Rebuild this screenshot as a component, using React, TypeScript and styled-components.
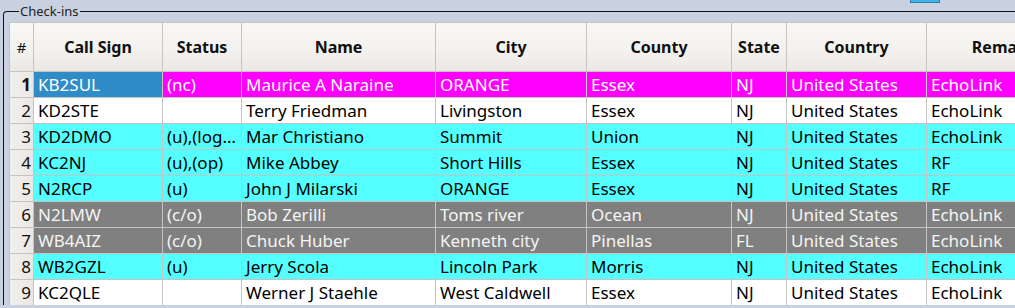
import styled, { createGlobalStyle } from "styled-components";

const GlobalStyle = createGlobalStyle`
  html, body {
    margin: 0;
    padding: 0;
    background: #c9d1e1;
    overflow: hidden;
  }
  body {
    width: 1015px;
    height: 308px;
    font-family: "Noto Sans", "Open Sans", sans-serif;
  }
`;

type Kind = "sel" | "nc" | "u" | "co" | "plain";

const columns = [
  { title: "Call Sign", width: 128 },
  { title: "Status", width: 78 },
  { title: "Name", width: 193 },
  { title: "City", width: 150 },
  { title: "County", width: 144 },
  { title: "State", width: 54 },
  { title: "Country", width: 139 },
  { title: "Remarks", width: 160 },
];

const rows: { kind: Kind; cells: string[] }[] = [
  { kind: "nc", cells: ["KB2SUL", "(nc)", "Maurice A Naraine", "ORANGE", "Essex", "NJ", "United States", "EchoLink"] },
  { kind: "plain", cells: ["KD2STE", "", "Terry Friedman", "Livingston", "Essex", "NJ", "United States", "EchoLink"] },
  { kind: "u", cells: ["KD2DMO", "(u),(log…", "Mar Christiano", "Summit", "Union", "NJ", "United States", "EchoLink"] },
  { kind: "u", cells: ["KC2NJ", "(u),(op)", "Mike Abbey", "Short Hills", "Essex", "NJ", "United States", "RF"] },
  { kind: "u", cells: ["N2RCP", "(u)", "John J Milarski", "ORANGE", "Essex", "NJ", "United States", "RF"] },
  { kind: "co", cells: ["N2LMW", "(c/o)", "Bob Zerilli", "Toms river", "Ocean", "NJ", "United States", "EchoLink"] },
  { kind: "co", cells: ["WB4AIZ", "(c/o)", "Chuck Huber", "Kenneth city", "Pinellas", "FL", "United States", "EchoLink"] },
  { kind: "u", cells: ["WB2GZL", "(u)", "Jerry Scola", "Lincoln Park", "Morris", "NJ", "United States", "EchoLink"] },
  { kind: "plain", cells: ["KC2QLE", "", "Werner J Staehle", "West Caldwell", "Essex", "NJ", "United States", "EchoLink"] },
];

const palette: Record<Kind, { bg: string; fg: string }> = {
  sel: { bg: "#308cc6", fg: "#ffffff" },
  nc: { bg: "#ff00ff", fg: "#ffffff" },
  u: { bg: "#55ffff", fg: "#000000" },
  co: { bg: "#808080", fg: "#f4f4f4" },
  plain: { bg: "#ffffff", fg: "#000000" },
};

const App = () => {
  return (
    <>
      <GlobalStyle />
      <TopStrip>
        <BlueButton />
      </TopStrip>
      <GroupBox>
        <Legend>Check-ins</Legend>
        <Grid>
          <Corner>#</Corner>
          {columns.map((c) => (
            <HeadCell key={c.title}>{c.title}</HeadCell>
          ))}
          {rows.map((r, i) => (
            <Row key={i}>
              <RowHead $current={i === 0}>{i + 1}</RowHead>
              {r.cells.map((text, j) => {
                const kind: Kind = i === 0 && j === 0 ? "sel" : r.kind;
                return (
                  <Cell key={j} $bg={palette[kind].bg} $fg={palette[kind].fg}>
                    {text}
                  </Cell>
                );
              })}
            </Row>
          ))}
        </Grid>
      </GroupBox>
    </>
  );
};

export default App;

const TopStrip = styled.div`
  height: 3px;
  display: flex;
  padding-left: 910px;
`;

const BlueButton = styled.div`
  width: 28px;
  height: 2px;
  background: #3fb4e6;
  border: 1px solid #2a7fae;
  border-top: none;
`;

const GroupBox = styled.fieldset`
  margin: 0 0 0 3px;
  padding: 3px 0 0 5px;
  border: none;
  border-top: 1px solid #111;
  border-left: 1px solid #111;
  border-top-left-radius: 4px;
  min-width: 0;
`;

const Legend = styled.legend`
  font-size: 13px;
  line-height: 16px;
  color: #222;
  padding: 0 1px;
  margin-left: 10px;
`;

const Grid = styled.div`
  display: grid;
  grid-template-columns: 23px ${columns.map((c) => `${c.width}px`).join(" ")};
  grid-template-rows: 48px;
  grid-auto-rows: 25px;
  gap: 1px;
  padding: 1px 0 0 1px;
  background: #c4c4c4;
  width: max-content;
`;

const Row = styled.div`
  display: contents;
`;

const HeadCell = styled.div`
  display: flex;
  align-items: center;
  justify-content: center;
  background: linear-gradient(#faf8f6, #f3f1ee 60%, #ebe8e4);
  font-size: 16px;
  font-weight: 700;
  color: #111;
  white-space: nowrap;
  overflow: hidden;
`;

const Corner = styled(HeadCell)`
  font-weight: 400;
  font-size: 15px;
`;

const RowHead = styled.div<{ $current: boolean }>`
  display: flex;
  align-items: center;
  justify-content: flex-end;
  padding-right: 2px;
  background: linear-gradient(90deg, #f1efec, #ebe8e4);
  font-size: 17px;
  font-weight: ${(p) => (p.$current ? 700 : 400)};
  color: #111;
`;

const Cell = styled.div<{ $bg: string; $fg: string }>`
  display: flex;
  align-items: center;
  padding-left: 4px;
  background: ${(p) => p.$bg};
  color: ${(p) => p.$fg};
  font-size: 17px;
  white-space: nowrap;
  overflow: hidden;
`;
